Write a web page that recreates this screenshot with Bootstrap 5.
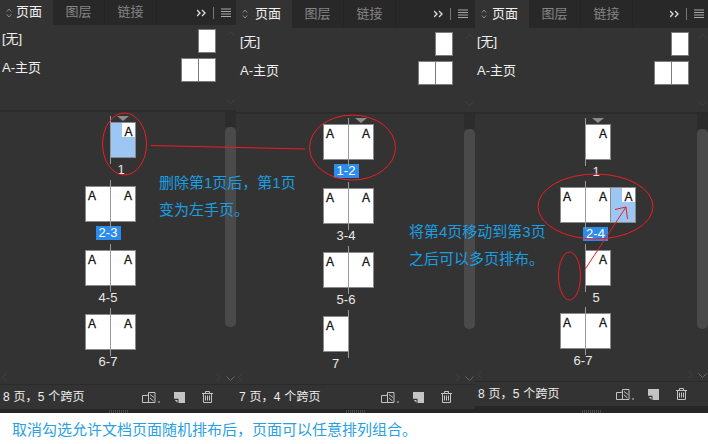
<!DOCTYPE html>
<html lang="zh">
<head>
<meta charset="utf-8">
<title>页面面板</title>
<link rel="stylesheet" href="https://cdn.jsdelivr.net/npm/bootstrap@5.3.0/dist/css/bootstrap.min.css">
<style>
html,body{margin:0;background:#fff;overflow:hidden}
body{font-family:"Liberation Sans","Noto Sans CJK SC",sans-serif}
.shot{position:relative;width:708px;height:444px}
.panes{height:413px}
.pane{background:#333;color:#eee;font-size:13px;flex:none}
.pane-a{width:236px;--tabs:25px;--masters:85px;--pitch:64px;--left:85px;--status:25px;--strip:4px;--mleft:2px;--tpad:16px;--tw:53px;--toolpad:5px;--masterpad:20px;--iconpad:23px}
.pane-b{width:239px;--tabs:28px;--masters:84px;--pitch:64px;--left:87px;--status:25px;--strip:4px;--mleft:4px;--tpad:19px;--tw:56px;--toolpad:7px;--masterpad:22px;--iconpad:23px}
.pane-c{width:233px;--tabs:28px;--masters:84px;--pitch:63px;--left:85px;--status:25px;--strip:7px;--mleft:2px;--tpad:18px;--tw:54px;--toolpad:4px;--masterpad:19px;--iconpad:21px}
.tabbar{height:var(--tabs);background:#282828;flex:none}
.tab-item{width:52px;text-align:center;color:#858585;border-right:1px solid #242424;line-height:calc(var(--tabs) - 1px)}
.tab-on{position:relative;width:var(--tw);background:#333;color:#f0f0f0;text-align:right;padding-right:11px;border:0}
.tab-grip{position:absolute;left:6px;top:50%;margin-top:-5px}
.tab-tools{margin-left:auto;padding-right:var(--toolpad)}
.masters{position:relative;height:var(--masters);padding:4px var(--masterpad) 0 var(--mleft);flex:none}
.master-row{height:24px;margin-bottom:5px}
.master-name{margin-top:-4px;color:#efefef}
.sheet-m{display:block;width:18px;height:24px;background:#fff;border:1px solid #7c7c7c}
.sheet-m+.sheet-m{margin-left:-1px}
.faint-up{position:absolute;right:1px;top:6px}
.faint-down{position:absolute;right:1px;bottom:6px}
.divider{height:2px;background:#2b2b2b;flex:none}
.pages{position:relative;min-height:0}
.page-list{padding:10px 0 0 var(--left)}
.pg-row{position:relative;width:51px;height:var(--pitch)}
.pg-wide{width:76px}
.pg-thumbs{position:relative;height:36px}
.sheet{position:relative;width:26px;height:36px;background:#fff;border:1px solid #8a8a8a;font-size:12px;line-height:14px;color:#111;-webkit-text-stroke:.3px #111;padding:2px 2px 0;flex:none}
.sheet+.sheet{margin-left:-1px}
.sheet-r{text-align:right;padding-right:3px}
.sheet-blank{width:25px;flex:none}
.sheet-blue{background:#9cc7f5;padding:0}
.sheet-fold{display:block;width:13px;height:14px;background:#fff;margin-left:auto;padding-top:2px;text-align:center}
.spine{position:absolute;left:25px;top:-6px;bottom:-6px;width:1px;background:#9a9a9a;z-index:1}
.marker{position:absolute;left:32px;top:-6px;width:0;height:0;border-left:6px solid transparent;border-right:6px solid transparent;border-top:5px solid #8c8c8c}
.pg-cap{height:calc(var(--pitch) - 36px);text-align:center;padding-right:5px;line-height:24px;color:#e8e8e8}
.cap-right{padding-left:26px}
.cap-left{padding-right:26px}
.cap-sel{display:inline-block;width:25px;height:14px;line-height:14px;background:#2d8ceb;color:#fff;vertical-align:middle;margin-top:-3px}
.track{width:11px;flex:none}
.track-top{height:15px;background:#2c2c2c;flex:none}
.track-thumb{height:200px;background:#4a4a4a;border-radius:5px;flex:none}
.chev{display:block;margin:auto auto 3px}
.hchev-l{position:absolute;left:2px;bottom:2px}
.hchev-r{position:absolute;right:15px;bottom:2px}
.statusbar{height:var(--status);border-top:1px solid #2a2a2a;padding-left:3px;padding-right:var(--iconpad);flex:none;color:#ededed;font-size:12px;letter-spacing:.2px}
.status-icons{margin-left:auto;color:#b9b9b9}
.ico-new{margin-left:14px}
.ico-bin{margin-left:17px}
.strip{height:var(--strip);background:#262626;flex:none}
.strip-grip{width:19px;height:3px;background:repeating-linear-gradient(90deg,#4a4a4a 0 1px,#262626 1px 2px)}
.note{position:absolute;color:#1a9fe3;font-size:15px;line-height:27px;white-space:nowrap;z-index:3}
.note-a{left:159px;top:169px}
.note-b{left:409px;top:218px}
.ink{position:absolute;left:0;top:0;z-index:2;pointer-events:none}
.caption{height:31px;padding-left:12px;color:#2a9fe3;font-size:15px;line-height:34px;white-space:nowrap;background:#fff}
</style>
</head>
<body>
<svg width="0" height="0" class="d-block">
<symbol id="i-grip" viewBox="0 0 6 10"><path d="M.8 3.6 3 1l2.2 2.6M.8 6.4 3 9l2.2-2.6" fill="none" stroke="#8a8a8a"/></symbol>
<symbol id="i-tools" viewBox="0 0 34 12"><path d="M0 3l3 3-3 3M5 3l3 3-3 3" fill="none" stroke="#d8d8d8" stroke-width="1.4"/><path d="M16.500 0v12" stroke="#777"/><path d="M24 2h10M24 4.500h10M24 7h10M24 9.500h10" stroke="#a8a8a8"/></symbol>
<symbol id="i-spread" viewBox="0 0 18 12"><path d="M.5 4.500h5l1-1.500v-1.500h6.500v10H.5zM6.500 3v8.500" fill="none" stroke="#c4c4c4"/><path d="M8 3.500l4 3M8 7l3.500 3" stroke="#c4c4c4"/><path d="M15.500 10.500h3l-1.500 1.500z" fill="#c4c4c4"/></symbol>
<symbol id="i-new" viewBox="0 0 11 11"><path d="M0 0h11v11H4.500V6.800H0z" fill="#c4c4c4"/><path d="M.8 8h2.700v2.700z" fill="#c4c4c4"/></symbol>
<symbol id="i-bin" viewBox="0 0 11 12"><path d="M0 2.500h11M3.500 2.500V.5h4v2M1.500 2.500v9h8v-9M3.500 4.500v5M5.500 4.500v5M7.500 4.500v5" fill="none" stroke="#c4c4c4"/></symbol>
<symbol id="i-up" viewBox="0 0 9 5"><path d="M.5 4.500 4.500.5l4 4" fill="none" stroke="#3f3f3f"/></symbol>
<symbol id="i-down" viewBox="0 0 9 5"><path d="M.5.500 4.500 4.500 8.500.500" fill="none" stroke="#3f3f3f"/></symbol>
<symbol id="i-left" viewBox="0 0 5 9"><path d="M4.500.5.500 4.500l4 4" fill="none" stroke="#3f3f3f"/></symbol>
<symbol id="i-right" viewBox="0 0 5 9"><path d="M.5.500 4.500 4.500.500 8.500" fill="none" stroke="#3f3f3f"/></symbol>
</svg>
<div class="shot d-flex flex-column">
<div class="panes d-flex">

<section class="pane pane-a d-flex flex-column">
<div class="tabbar d-flex"><div class="tab-item tab-on"><svg class="tab-grip" width="6" height="10"><use href="#i-grip"/></svg>页面</div><div class="tab-item">图层</div><div class="tab-item">链接</div><div class="tab-tools d-flex align-items-center"><svg width="34" height="12"><use href="#i-tools"/></svg></div></div>
<div class="masters">
<svg class="faint-up" width="9" height="5"><use href="#i-up"/></svg><svg class="faint-down" width="9" height="5"><use href="#i-down"/></svg>
<div class="master-row d-flex justify-content-between align-items-center"><span class="master-name">[无]</span><span class="d-flex"><i class="sheet-m"></i></span></div>
<div class="master-row d-flex justify-content-between align-items-center"><span class="master-name">A-主页</span><span class="d-flex"><i class="sheet-m"></i><i class="sheet-m"></i></span></div>
</div>
<div class="divider"></div>
<div class="pages flex-grow-1 d-flex">
<div class="page-list flex-grow-1">
<div class="pg-row"><i class="marker"></i><div class="pg-thumbs d-flex"><i class="spine"></i><div class="sheet-blank"></div><div class="sheet sheet-blue"><span class="sheet-fold">A</span></div></div><div class="pg-cap cap-right">1</div></div>
<div class="pg-row"><div class="pg-thumbs d-flex"><i class="spine"></i><div class="sheet">A</div><div class="sheet sheet-r">A</div></div><div class="pg-cap"><span class="cap-sel">2-3</span></div></div>
<div class="pg-row"><div class="pg-thumbs d-flex"><i class="spine"></i><div class="sheet">A</div><div class="sheet sheet-r">A</div></div><div class="pg-cap">4-5</div></div>
<div class="pg-row"><div class="pg-thumbs d-flex"><i class="spine"></i><div class="sheet">A</div><div class="sheet sheet-r">A</div></div><div class="pg-cap">6-7</div></div>
</div>
<svg class="hchev-l" width="5" height="9"><use href="#i-left"/></svg><svg class="hchev-r" width="5" height="9"><use href="#i-right"/></svg>
<div class="track d-flex flex-column"><div class="track-top"></div><div class="track-thumb"></div><svg class="chev" width="9" height="5"><path d="M.5.500 4.500 4.500 8.500.500" fill="none" stroke="#666"/></svg></div>
</div>
<div class="statusbar d-flex align-items-center"><span>8 页，5 个跨页</span><span class="status-icons d-flex align-items-center"><svg width="18" height="12"><use href="#i-spread"/></svg><svg class="ico-new" width="11" height="11"><use href="#i-new"/></svg><svg class="ico-bin" width="11" height="12"><use href="#i-bin"/></svg></span></div>
<div class="strip d-flex justify-content-center align-items-end"><div class="strip-grip"></div></div>
</section>

<section class="pane pane-b d-flex flex-column">
<div class="tabbar d-flex"><div class="tab-item tab-on"><svg class="tab-grip" width="6" height="10"><use href="#i-grip"/></svg>页面</div><div class="tab-item">图层</div><div class="tab-item">链接</div><div class="tab-tools d-flex align-items-center"><svg width="34" height="12"><use href="#i-tools"/></svg></div></div>
<div class="masters">
<svg class="faint-up" width="9" height="5"><use href="#i-up"/></svg><svg class="faint-down" width="9" height="5"><use href="#i-down"/></svg>
<div class="master-row d-flex justify-content-between align-items-center"><span class="master-name">[无]</span><span class="d-flex"><i class="sheet-m"></i></span></div>
<div class="master-row d-flex justify-content-between align-items-center"><span class="master-name">A-主页</span><span class="d-flex"><i class="sheet-m"></i><i class="sheet-m"></i></span></div>
</div>
<div class="divider"></div>
<div class="pages flex-grow-1 d-flex">
<div class="page-list flex-grow-1">
<div class="pg-row"><i class="marker"></i><div class="pg-thumbs d-flex"><i class="spine"></i><div class="sheet">A</div><div class="sheet sheet-r">A</div></div><div class="pg-cap"><span class="cap-sel">1-2</span></div></div>
<div class="pg-row"><div class="pg-thumbs d-flex"><i class="spine"></i><div class="sheet">A</div><div class="sheet sheet-r">A</div></div><div class="pg-cap">3-4</div></div>
<div class="pg-row"><div class="pg-thumbs d-flex"><i class="spine"></i><div class="sheet">A</div><div class="sheet sheet-r">A</div></div><div class="pg-cap">5-6</div></div>
<div class="pg-row"><div class="pg-thumbs d-flex"><i class="spine"></i><div class="sheet">A</div></div><div class="pg-cap cap-left">7</div></div>
</div>
<svg class="hchev-l" width="5" height="9"><use href="#i-left"/></svg><svg class="hchev-r" width="5" height="9"><use href="#i-right"/></svg>
<div class="track d-flex flex-column"><div class="track-top"></div><div class="track-thumb"></div><svg class="chev" width="9" height="5"><path d="M.5.500 4.500 4.500 8.500.500" fill="none" stroke="#666"/></svg></div>
</div>
<div class="statusbar d-flex align-items-center"><span>7 页，4 个跨页</span><span class="status-icons d-flex align-items-center"><svg width="18" height="12"><use href="#i-spread"/></svg><svg class="ico-new" width="11" height="11"><use href="#i-new"/></svg><svg class="ico-bin" width="11" height="12"><use href="#i-bin"/></svg></span></div>
<div class="strip d-flex justify-content-center align-items-end"><div class="strip-grip"></div></div>
</section>

<section class="pane pane-c d-flex flex-column">
<div class="tabbar d-flex"><div class="tab-item tab-on"><svg class="tab-grip" width="6" height="10"><use href="#i-grip"/></svg>页面</div><div class="tab-item">图层</div><div class="tab-item">链接</div><div class="tab-tools d-flex align-items-center"><svg width="34" height="12"><use href="#i-tools"/></svg></div></div>
<div class="masters">
<svg class="faint-up" width="9" height="5"><use href="#i-up"/></svg><svg class="faint-down" width="9" height="5"><use href="#i-down"/></svg>
<div class="master-row d-flex justify-content-between align-items-center"><span class="master-name">[无]</span><span class="d-flex"><i class="sheet-m"></i></span></div>
<div class="master-row d-flex justify-content-between align-items-center"><span class="master-name">A-主页</span><span class="d-flex"><i class="sheet-m"></i><i class="sheet-m"></i></span></div>
</div>
<div class="divider"></div>
<div class="pages flex-grow-1 d-flex">
<div class="page-list flex-grow-1">
<div class="pg-row"><i class="marker"></i><div class="pg-thumbs d-flex"><i class="spine"></i><div class="sheet-blank"></div><div class="sheet sheet-r">A</div></div><div class="pg-cap cap-right">1</div></div>
<div class="pg-row pg-wide"><div class="pg-thumbs d-flex"><i class="spine"></i><div class="sheet">A</div><div class="sheet sheet-r">A</div><div class="sheet sheet-blue"><span class="sheet-fold">A</span></div></div><div class="pg-cap"><span class="cap-sel">2-4</span></div></div>
<div class="pg-row"><div class="pg-thumbs d-flex"><i class="spine"></i><div class="sheet-blank"></div><div class="sheet sheet-r">A</div></div><div class="pg-cap cap-right">5</div></div>
<div class="pg-row"><div class="pg-thumbs d-flex"><i class="spine"></i><div class="sheet">A</div><div class="sheet sheet-r">A</div></div><div class="pg-cap">6-7</div></div>
</div>
<svg class="hchev-l" width="5" height="9"><use href="#i-left"/></svg><svg class="hchev-r" width="5" height="9"><use href="#i-right"/></svg>
<div class="track d-flex flex-column"><div class="track-top"></div><div class="track-thumb"></div><svg class="chev" width="9" height="5"><path d="M.5.500 4.500 4.500 8.500.500" fill="none" stroke="#666"/></svg></div>
</div>
<div class="statusbar d-flex align-items-center"><span>8 页，5 个跨页</span><span class="status-icons d-flex align-items-center"><svg width="18" height="12"><use href="#i-spread"/></svg><svg class="ico-new" width="11" height="11"><use href="#i-new"/></svg><svg class="ico-bin" width="11" height="12"><use href="#i-bin"/></svg></span></div>
<div class="strip d-flex justify-content-center align-items-end"><div class="strip-grip"></div></div>
</section>
</div>

<div class="caption">取消勾选允许文档页面随机排布后，页面可以任意排列组合。</div>

<div class="note note-a">删除第1页后，第1页<br>变为左手页。</div>
<div class="note note-b">将第4页移动到第3页<br>之后可以多页排布。</div>
<svg class="ink" width="708" height="444" fill="none" stroke="#f01c24">
<ellipse cx="124.500" cy="144" rx="22" ry="31"/>
<ellipse cx="352.500" cy="147.500" rx="43" ry="32.500"/>
<ellipse cx="595.500" cy="206.500" rx="57.500" ry="32.500"/>
<ellipse cx="569.500" cy="276" rx="11" ry="24"/>
<path d="M151 145.500 305 149"/>
<path d="M585 269.500 626 207M615 209.500 626 207 627.500 219"/>
</svg>
</div>
</body>
</html>
